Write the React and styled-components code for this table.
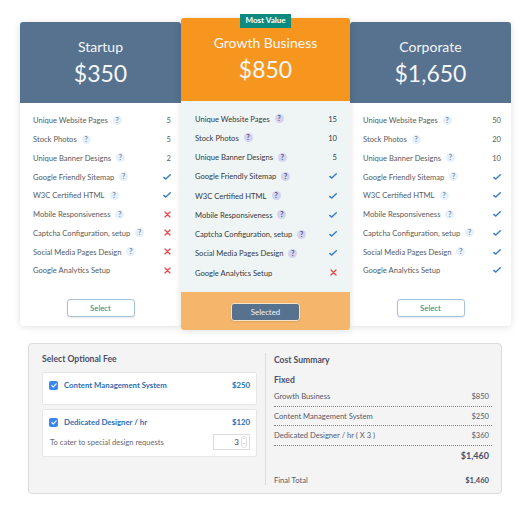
import React, { useState } from "react";
import styled, { createGlobalStyle } from "styled-components";

const GlobalStyle = createGlobalStyle`
  body {
    margin: 0;
    background: #ffffff;
    font-family: "Lato", "Open Sans", sans-serif;
  }
  * { box-sizing: border-box; }
`;

const FEATURES = [
  "Unique Website Pages",
  "Stock Photos",
  "Unique Banner Designs",
  "Google Friendly Sitemap",
  "W3C Certified HTML",
  "Mobile Responsiveness",
  "Captcha Configuration, setup",
  "Social Media Pages Design",
  "Google Analytics Setup",
];

const PLANS = [
  {
    name: "Startup",
    price: "$350",
    values: ["5", "5", "2", true, true, false, false, false, false],
  },
  {
    name: "Growth Business",
    price: "$850",
    featured: true,
    values: ["15", "10", "5", true, true, true, true, true, false],
  },
  {
    name: "Corporate",
    price: "$1,650",
    values: ["50", "20", "10", true, true, true, true, true, true],
  },
];

const Page = styled.div`
  width: 530px;
  padding: 18px 18px 20px 20px;
`;

const Plans = styled.div`
  display: flex;
  align-items: flex-start;
`;

const Card = styled.div`
  position: relative;
  display: flex;
  flex-direction: column;
  width: ${(p) => (p.$featured ? 169 : 161)}px;
  margin-top: ${(p) => (p.$featured ? 0 : 4)}px;
  height: ${(p) => (p.$featured ? 312 : 304)}px;
  background: ${(p) => (p.$featured ? "#eff5f5" : "#ffffff")};
  border-radius: 3px;
  box-shadow: 0 1px 7px rgba(0, 0, 0, 0.13);
  z-index: ${(p) => (p.$featured ? 2 : 1)};
`;

const Header = styled.div`
  height: ${(p) => (p.$featured ? 83 : 81)}px;
  background: ${(p) => (p.$featured ? "#f7961f" : "#56728f")};
  border-radius: 3px 3px 0 0;
  color: #f4f6f8;
  display: flex;
  flex-direction: column;
  align-items: center;
  padding-top: 16px;
`;

const Badge = styled.div`
  position: absolute;
  top: -4px;
  left: 50%;
  transform: translateX(-50%);
  background: #0e8b80;
  color: #ffffff;
  font-size: 8px;
  font-weight: 700;
  padding: 2px 6px 3px;
  line-height: 9px;
  white-space: nowrap;
`;

const PlanName = styled.div`
  font-size: 14px;
  line-height: 18px;
`;

const Price = styled.div`
  font-size: 23px;
  line-height: 28px;
  margin-top: 3px;
`;

const FeatureList = styled.div`
  padding: ${(p) => (p.$featured ? "8px 13px 0 14px" : "8px 10px 0 13px")};
  flex: 1;
`;

const Row = styled.div`
  display: flex;
  align-items: center;
  height: ${(p) => (p.$featured ? 19.25 : 18.75)}px;
  font-size: 7.6px;
  color: ${(p) => (p.$featured ? "#333a44" : "#555b63")};
`;

const Label = styled.span`
  white-space: nowrap;
`;

const Help = styled.span`
  display: inline-flex;
  align-items: center;
  justify-content: center;
  width: 9px;
  height: 9px;
  margin-left: 5px;
  border-radius: 50%;
  background: ${(p) => (p.$featured ? "#d3d3ef" : "#e6f0fb")};
  color: ${(p) => (p.$featured ? "#4c4f7c" : "#6f8aa8")};
  font-size: 7px;
  font-weight: 700;
  line-height: 9px;
`;

const Value = styled.span`
  margin-left: auto;
  display: flex;
  align-items: center;
`;

const Footer = styled.div`
  display: flex;
  justify-content: center;
  padding: ${(p) => (p.$featured ? "11px 0 9px" : "0 0 9px")};
  background: ${(p) => (p.$featured ? "#f5b66b" : "transparent")};
  border-radius: 0 0 3px 3px;
`;

const SelectButton = styled.button`
  width: ${(p) => (p.$active ? 69 : 68)}px;
  height: 18px;
  border-radius: 3px;
  font-family: inherit;
  font-size: 7.8px;
  cursor: pointer;
  border: 1px solid ${(p) => (p.$active ? "#f6e3c8" : "#a7c3dc")};
  background: ${(p) => (p.$active ? "#56728f" : "#ffffff")};
  color: ${(p) => (p.$active ? "#f1f4f7" : "#18897e")};
  box-shadow: 0 1px 2px rgba(0, 0, 0, 0.1);
`;

const Check = () => (
  <svg width="8" height="6" viewBox="0 0 8 6">
    <path d="M0.8 3.4 L2.8 5.1 L7.3 0.8" fill="none" stroke="#3a7cc6" strokeWidth="1.4" strokeLinecap="round" strokeLinejoin="round" />
  </svg>
);

const Cross = () => (
  <svg width="7" height="7" viewBox="0 0 7 7">
    <path d="M1 1 L6 6 M6 1 L1 6" fill="none" stroke="#ea4a4a" strokeWidth="1.3" strokeLinecap="round" />
  </svg>
);

const Panel = styled.div`
  margin: 13px 0 0 8px;
  width: 474px;
  height: 151px;
  background: #f4f4f4;
  border: 1px solid #dcdcdc;
  border-radius: 4px;
  display: grid;
  grid-template-columns: 215px 227px;
  column-gap: 8px;
  padding: 8px 0 8px 13px;
`;

const SectionTitle = styled.div`
  font-size: 8.6px;
  font-weight: 700;
  color: #4b4f68;
  line-height: 14px;
`;

const FeeBox = styled.div`
  background: #ffffff;
  border: 1px solid #e6e6e6;
  border-radius: 2px;
  padding: 7px 6px 6px 6px;
  height: ${(p) => p.$h}px;
  margin-top: ${(p) => p.$mt}px;
`;

const FeeRow = styled.div`
  display: flex;
  align-items: center;
  font-size: 7.8px;
  font-weight: 700;
  color: #2e6db0;
`;

const Box = styled.span`
  width: 9px;
  height: 9px;
  border-radius: 2px;
  background: #3a86f0;
  display: inline-flex;
  align-items: center;
  justify-content: center;
  margin-right: 6px;
`;

const FeePrice = styled.span`
  margin-left: auto;
`;

const FeeNote = styled.div`
  display: flex;
  align-items: center;
  justify-content: space-between;
  margin-top: 7px;
  font-size: 7.6px;
  color: #666a72;
  padding-left: 1px;
`;

const Qty = styled.div`
  width: 37px;
  height: 16px;
  background: #ffffff;
  border: 1px solid #dddddd;
  display: flex;
  align-items: center;
  justify-content: flex-end;
  padding-right: 2px;
  font-size: 8px;
  color: #444;
`;

const Spin = styled.span`
  display: flex;
  flex-direction: column;
  align-items: center;
  justify-content: center;
  width: 6px;
  height: 12px;
  margin-left: 2px;
  border: 1px solid #dedede;
  border-radius: 3px;
  font-size: 4px;
  line-height: 5px;
  color: #777;
`;

const Summary = styled.div`
  border-left: 1px solid #dcdcdc;
  padding: 0 0 0 8px;
  margin-top: 1px;
  height: 132px;
`;

const Sub = styled.div`
  font-size: 8.6px;
  font-weight: 700;
  color: #4b4f68;
  margin-top: 6px;
  line-height: 14px;
`;

const SumRow = styled.div`
  display: flex;
  justify-content: space-between;
  align-items: center;
  height: 19.5px;
  padding: 0 3px 0 0;
  font-size: 7.6px;
  color: #555a6a;
  border-bottom: ${(p) => (p.$dotted ? "1px dotted #7a7f8c" : "none")};
`;

const Total = styled.div`
  text-align: right;
  padding-right: 3px;
  font-size: 9px;
  font-weight: 700;
  color: #4b4f68;
  margin-top: 4px;
  line-height: 12px;
`;

const FinalRow = styled(SumRow)`
  margin-top: 9px;
  span:last-child { font-weight: 700; color: #4b4f68; }
`;

function PlanCard({ plan, selected, onSelect }) {
  const f = !!plan.featured;
  return (
    <Card $featured={f}>
      {f && <Badge>Most Value</Badge>}
      <Header $featured={f}>
        <PlanName>{plan.name}</PlanName>
        <Price>{plan.price}</Price>
      </Header>
      <FeatureList $featured={f}>
        {FEATURES.map((name, i) => {
          const v = plan.values[i];
          return (
            <Row key={name} $featured={f}>
              <Label>{name}</Label>
              {i < FEATURES.length - 1 && <Help $featured={f}>?</Help>}
              <Value>{v === true ? <Check /> : v === false ? <Cross /> : v}</Value>
            </Row>
          );
        })}
      </FeatureList>
      <Footer $featured={f}>
        <SelectButton $active={selected} onClick={onSelect}>
          {selected ? "Selected" : "Select"}
        </SelectButton>
      </Footer>
    </Card>
  );
}

const Tick = () => (
  <svg width="6" height="5" viewBox="0 0 6 5">
    <path d="M0.8 2.6 L2.3 4 L5.2 0.9" fill="none" stroke="#fff" strokeWidth="1.1" strokeLinecap="round" />
  </svg>
);

export default function App() {
  const [selected, setSelected] = useState(1);
  return (
    <Page>
      <GlobalStyle />
      <Plans>
        {PLANS.map((p, i) => (
          <PlanCard key={p.name} plan={p} selected={selected === i} onSelect={() => setSelected(i)} />
        ))}
      </Plans>
      <Panel>
        <div>
          <SectionTitle>Select Optional Fee</SectionTitle>
          <FeeBox $h={33} $mt={6}>
            <FeeRow>
              <Box><Tick /></Box>
              Content Management System
              <FeePrice>$250</FeePrice>
            </FeeRow>
          </FeeBox>
          <FeeBox $h={48} $mt={4}>
            <FeeRow>
              <Box><Tick /></Box>
              Dedicated Designer / hr
              <FeePrice>$120</FeePrice>
            </FeeRow>
            <FeeNote>
              To cater to special design requests
              <Qty>
                3
                <Spin>
                  <span>˄</span>
                  <span>˅</span>
                </Spin>
              </Qty>
            </FeeNote>
          </FeeBox>
        </div>
        <Summary>
          <SectionTitle>Cost Summary</SectionTitle>
          <Sub>Fixed</Sub>
          <SumRow $dotted>
            <span>Growth Business</span>
            <span>$850</span>
          </SumRow>
          <SumRow $dotted>
            <span>Content Management System</span>
            <span>$250</span>
          </SumRow>
          <SumRow $dotted>
            <span>Dedicated Designer / hr ( X 3 )</span>
            <span>$360</span>
          </SumRow>
          <Total>$1,460</Total>
          <FinalRow>
            <span>Final Total</span>
            <span>$1,460</span>
          </FinalRow>
        </Summary>
      </Panel>
    </Page>
  );
}
